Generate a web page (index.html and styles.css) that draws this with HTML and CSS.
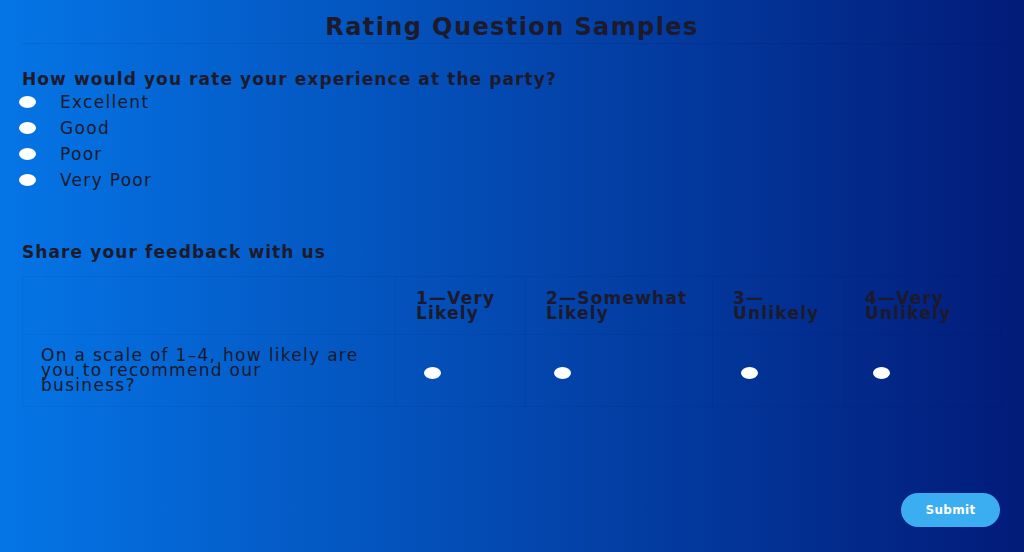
FILE: index.html
```html
<!DOCTYPE html>
<html lang="en">
<head>
<meta charset="utf-8">
<title>Rating Question Samples</title>
<link rel="stylesheet" href="styles.css">
</head>
<body>
<main class="page">
  <h1 class="title">Rating Question Samples</h1>
  <hr class="rule">
  <section class="question">
    <h2 class="q-label">How would you rate your experience at the party?</h2>
    <label class="option"><input type="radio" name="exp"><span>Excellent</span></label>
    <label class="option"><input type="radio" name="exp"><span>Good</span></label>
    <label class="option"><input type="radio" name="exp"><span>Poor</span></label>
    <label class="option"><input type="radio" name="exp"><span>Very Poor</span></label>
  </section>
  <section class="feedback">
    <h2 class="q-label">Share your feedback with us</h2>
    <table class="grid">
      <colgroup>
        <col class="c0"><col class="c1"><col class="c2"><col class="c3"><col class="c4">
      </colgroup>
      <thead>
        <tr>
          <th></th>
          <th>1—Very Likely</th>
          <th>2—Somewhat Likely</th>
          <th>3—Unlikely</th>
          <th>4—Very Unlikely</th>
        </tr>
      </thead>
      <tbody>
        <tr>
          <td class="stmt">On a scale of 1–4, how likely are you to recommend our business?</td>
          <td><input type="radio" name="rec"></td>
          <td><input type="radio" name="rec"></td>
          <td><input type="radio" name="rec"></td>
          <td><input type="radio" name="rec"></td>
        </tr>
      </tbody>
    </table>
  </section>
  <div class="actions">
    <button class="submit" type="button">Submit</button>
  </div>
</main>
</body>
</html>
```
FILE: styles.css
```css
* { box-sizing: border-box; }
html, body { margin: 0; padding: 0; height: 100%; }
body {
  background: linear-gradient(to right, #0575e6, #021b79);
  font-family: "DejaVu Sans", "Noto Sans", sans-serif;
  color: #1c1a2b;
  letter-spacing: 1.3px;
}
.page {
  min-height: 100vh;
  display: flex;
  flex-direction: column;
  padding: 12px 22px 25px 22px;
}
.title {
  margin: 0;
  font-size: 24px;
  line-height: 30px;
  font-weight: bold;
  text-align: center;
  letter-spacing: 1.4px;
}
.rule {
  margin: 1px 0 0 0;
  border: 0;
  height: 1px;
  background: rgba(0, 0, 0, 0.07);
}
.question { margin-top: 25px; }
.q-label {
  margin: 0;
  font-size: 17px;
  line-height: 20px;
  font-weight: bold;
  letter-spacing: 1.1px;
}
.option {
  display: flex;
  align-items: center;
  height: 26px;
  font-size: 17px;
}
.option input { margin: 0 24px 0 -3px; }
input[type="radio"] {
  -webkit-appearance: none;
  appearance: none;
  width: 17px;
  height: 12px;
  border-radius: 50%;
  background: #fff;
  border: 0;
  flex: none;
}
.feedback { margin-top: 49px; }
.grid {
  margin-top: 14px;
  border-collapse: collapse;
  width: 980px;
  table-layout: fixed;
}
.c0 { width: 373px; }
.c1 { width: 130px; }
.c2 { width: 187px; }
.c3 { width: 132px; }
.grid th, .grid td {
  border: 1px solid rgba(0, 0, 0, 0.05);
  text-align: left;
  vertical-align: middle;
  padding: 0 20px;
  font-size: 17px;
  line-height: 15px;
}
.grid th { height: 58px; font-weight: bold; letter-spacing: 1.2px; }
.grid td { height: 72px; }
.grid td.stmt { padding: 0 34px 0 18px; }
.grid td input { margin: 4px 0 0 8px; display: block; }
.actions {
  margin-top: auto;
  display: flex;
  justify-content: flex-end;
  padding-right: 2px;
}
.submit {
  width: 99px;
  height: 34px;
  border: 0;
  border-radius: 17px;
  background: #3aaef0;
  color: #fff;
  font-family: "DejaVu Sans", sans-serif;
  font-size: 12px;
  font-weight: bold;
  letter-spacing: 0.3px;
}
```
